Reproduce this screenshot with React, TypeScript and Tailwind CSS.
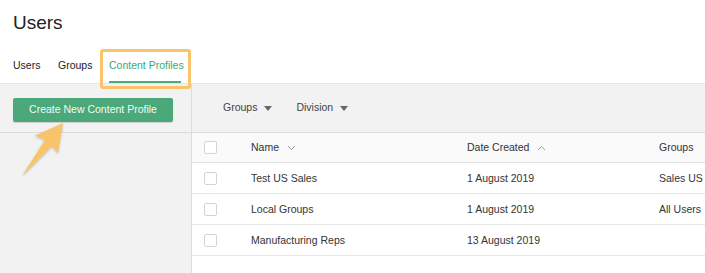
import React from "react";

const ROWS = [
  { name: "Test US Sales", date: "1 August 2019", group: "Sales US" },
  { name: "Local Groups", date: "1 August 2019", group: "All Users" },
  { name: "Manufacturing Reps", date: "13 August 2019", group: "" },
];

function Checkbox() {
  return <div className="w-[13px] h-[13px] rounded-[2px] border border-[#d4d4d4] bg-white" />;
}

function Caret() {
  return (
    <svg width="8" height="5" viewBox="0 0 8 5" className="ml-[7px]">
      <path d="M0 0h8L4 5z" fill="#666" />
    </svg>
  );
}

export default function App() {
  return (
    <div
      className="relative w-[705px] h-[273px] overflow-hidden bg-white text-[#333]"
      style={{ fontFamily: "'Liberation Sans', Arial, sans-serif" }}
    >
      {/* Page header */}
      <div className="h-[83px] px-[13px]">
        <h1 className="pt-[12px] text-[19px] leading-[22px] text-[#222]">Users</h1>
        <div className="flex mt-[25px] text-[10.5px] leading-[13px] text-[#222]">
          <span className="w-[45px]">Users</span>
          <span className="w-[51px]">Groups</span>
          <div className="flex flex-col">
            <span className="text-[#3aa874]">Content Profiles</span>
            <div className="mt-[9px] h-[2px] w-[72px] bg-[#4caa7c]" />
          </div>
        </div>
      </div>

      {/* Body */}
      <div className="flex h-[190px] border-t border-[#e6e6e6]">
        <aside className="w-[192px] shrink-0 bg-[#f2f2f2] border-r border-[#dcdcdc]">
          <div className="h-[49px] px-[13px] pt-[12px] border-b border-[#dcdcdc]">
            <button className="w-[160px] h-[24px] rounded-[2px] bg-[#4aa87b] text-[#f4fbf7] text-[10.5px] shadow-[0_1px_1px_rgba(0,0,0,0.15)]">
              Create New Content Profile
            </button>
          </div>
        </aside>

        <main className="flex-1 flex flex-col">
          <div className="h-[49px] shrink-0 bg-[#f2f2f2] border-b border-[#dcdcdc] flex items-center pl-[31px] text-[10.5px] text-[#444]">
            <span className="flex items-center">Groups<Caret /></span>
            <span className="flex items-center ml-[24px]">Division<Caret /></span>
          </div>
          <div className="h-[30px] shrink-0 bg-[#fafafa] border-b border-[#e0e0e0] flex items-center text-[10.5px] text-[#333]">
            <div className="w-[59px] pl-[12px]"><Checkbox /></div>
            <div className="w-[216px] flex items-center">
              Name
              <svg width="9" height="6" viewBox="0 0 9 6" className="ml-[8px]">
                <path d="M1 1l3.5 3.5L8 1" fill="none" stroke="#999" strokeWidth="1" />
              </svg>
            </div>
            <div className="w-[192px] flex items-center">
              Date Created
              <svg width="9" height="6" viewBox="0 0 9 6" className="ml-[8px]">
                <path d="M1 5l3.5-3.5L8 5" fill="none" stroke="#999" strokeWidth="1" />
              </svg>
            </div>
            <div>Groups</div>
          </div>
          {ROWS.map((r) => (
            <div key={r.name} className="h-[31px] shrink-0 border-b border-[#e6e6e6] flex items-center pt-[1px] text-[10.5px] text-[#333]">
              <div className="w-[59px] pl-[12px]"><Checkbox /></div>
              <div className="w-[216px]">{r.name}</div>
              <div className="w-[192px]">{r.date}</div>
              <div>{r.group}</div>
            </div>
          ))}
        </main>
      </div>

      {/* Annotation: highlight box */}
      <div className="absolute left-[100px] top-[49px] w-[91px] h-[40px] rounded-[3px] border-[3px] border-[#f9c36b]" />

      {/* Annotation: arrow */}
      <svg className="absolute left-0 top-[115px]" width="80" height="70" viewBox="0 115 80 70">
        <defs>
          <filter id="sh" x="-20%" y="-20%" width="150%" height="150%">
            <feDropShadow dx="0" dy="1" stdDeviation="1" floodColor="#000" floodOpacity="0.25" />
          </filter>
        </defs>
        <path
          d="M63 123 L35 135.5 L45 140 L22 176 L52 146 L58 153 Z"
          fill="#f9c36b"
          filter="url(#sh)"
        />
      </svg>
    </div>
  );
}
